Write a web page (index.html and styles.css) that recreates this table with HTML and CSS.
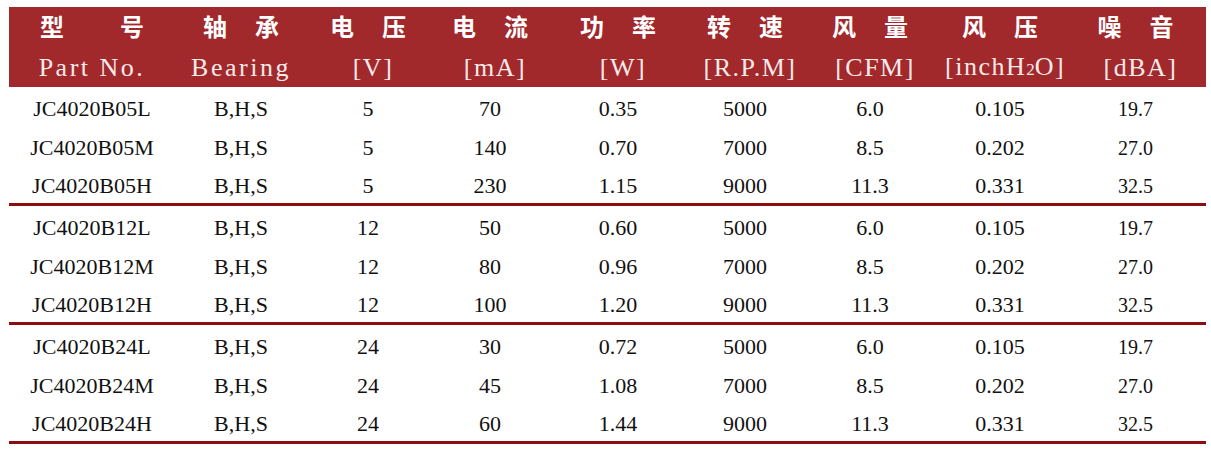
FILE: index.html
```html
<!DOCTYPE html>
<html lang="zh">
<head>
<meta charset="utf-8">
<title>JC4020 Fan Specifications</title>
<link rel="stylesheet" href="styles.css">
</head>
<body>
<table class="spec">
  <colgroup>
    <col class="c1"><col class="c2"><col class="c3"><col class="c4"><col class="c5"><col class="c6"><col class="c7"><col class="c8"><col class="c9">
  </colgroup>
  <thead>
    <tr class="cn-row">
      <th><span class="cn wide"><span>型</span><span>号</span></span></th>
      <th><span class="cn"><span>轴</span><span>承</span></span></th>
      <th><span class="cn"><span>电</span><span>压</span></span></th>
      <th><span class="cn"><span>电</span><span>流</span></span></th>
      <th><span class="cn"><span>功</span><span>率</span></span></th>
      <th><span class="cn"><span>转</span><span>速</span></span></th>
      <th><span class="cn"><span>风</span><span>量</span></span></th>
      <th><span class="cn"><span>风</span><span>压</span></span></th>
      <th><span class="cn"><span>噪</span><span>音</span></span></th>
    </tr>
    <tr class="en-row">
      <th class="first">Part No.</th>
      <th class="first">Bearing</th>
      <th>[V]</th>
      <th>[mA]</th>
      <th>[W]</th>
      <th>[R.P.M]</th>
      <th>[CFM]</th>
      <th>[inchH<span class="sub">2</span>O]</th>
      <th>[dBA]</th>
    </tr>
  </thead>
  <tbody>
    <tr class="r39"><td>JC4020B05L</td><td>B,H,S</td><td>5</td><td>70</td><td>0.35</td><td>5000</td><td>6.0</td><td>0.105</td><td class="sm">19.7</td></tr>
    <tr class="r38"><td>JC4020B05M</td><td>B,H,S</td><td>5</td><td>140</td><td>0.70</td><td>7000</td><td>8.5</td><td>0.202</td><td class="sm">27.0</td></tr>
    <tr class="rend"><td>JC4020B05H</td><td>B,H,S</td><td>5</td><td>230</td><td>1.15</td><td>9000</td><td>11.3</td><td>0.331</td><td class="sm">32.5</td></tr>
  </tbody>
  <tbody>
    <tr class="r39"><td>JC4020B12L</td><td>B,H,S</td><td>12</td><td>50</td><td>0.60</td><td>5000</td><td>6.0</td><td>0.105</td><td class="sm">19.7</td></tr>
    <tr class="r38"><td>JC4020B12M</td><td>B,H,S</td><td>12</td><td>80</td><td>0.96</td><td>7000</td><td>8.5</td><td>0.202</td><td class="sm">27.0</td></tr>
    <tr class="rend"><td>JC4020B12H</td><td>B,H,S</td><td>12</td><td>100</td><td>1.20</td><td>9000</td><td>11.3</td><td>0.331</td><td class="sm">32.5</td></tr>
  </tbody>
  <tbody>
    <tr class="r39"><td>JC4020B24L</td><td>B,H,S</td><td>24</td><td>30</td><td>0.72</td><td>5000</td><td>6.0</td><td>0.105</td><td class="sm">19.7</td></tr>
    <tr class="r38"><td>JC4020B24M</td><td>B,H,S</td><td>24</td><td>45</td><td>1.08</td><td>7000</td><td>8.5</td><td>0.202</td><td class="sm">27.0</td></tr>
    <tr class="rend"><td>JC4020B24H</td><td>B,H,S</td><td>24</td><td>60</td><td>1.44</td><td>9000</td><td>11.3</td><td>0.331</td><td class="sm">32.5</td></tr>
  </tbody>
</table>
</body>
</html>
```
FILE: styles.css
```css
html, body {
  margin: 0;
  padding: 0;
  background: #ffffff;
}

body {
  padding: 7px 0 0 9px;
  font-family: "Liberation Serif", "Times New Roman", serif;
}

.spec {
  border-collapse: separate;
  border-spacing: 0;
  table-layout: fixed;
  width: 1197px;
}

.c1 { width: 166px; }
.c2 { width: 132px; }
.c3 { width: 122px; }
.c4 { width: 122px; }
.c5 { width: 134px; }
.c6 { width: 120px; }
.c7 { width: 130px; }
.c8 { width: 130px; }
.c9 { width: 141px; }

th {
  padding: 0;
  box-sizing: border-box;
  text-align: center;
  font-weight: normal;
  background: #a1282b;
}

.cn-row,
.en-row {
  height: 40px;
}

.cn-row th {
  height: 40px;
  vertical-align: middle;
}

.cn {
  display: inline-flex;
  gap: 28px;
  font-family: "Noto Sans CJK SC", sans-serif;
  font-weight: 700;
  font-size: 24px;
  line-height: 24px;
  color: #ffffff;
}

.cn.wide {
  gap: 56px;
}

.en-row th {
  height: 40px;
  vertical-align: middle;
  padding: 2px 0 0 10px;
  font-family: "Liberation Serif", "Times New Roman", serif;
  font-size: 26px;
  line-height: 30px;
  letter-spacing: 1.5px;
  color: #fbeaea;
}

.en-row th.first {
  padding-left: 0;
  letter-spacing: 2.5px;
}

.sub {
  font-size: 17px;
  letter-spacing: 0;
}

td {
  padding: 5px 0 0 0;
  box-sizing: border-box;
  text-align: center;
  vertical-align: middle;
  font-size: 22px;
  line-height: 26px;
  color: #111111;
}

.r39 { height: 39px; }
.r38 { height: 38px; }
.rend { height: 42px; }

.r39 td { height: 39px; }
.r38 td { height: 38px; }
.rend td {
  height: 42px;
  border-bottom: 3px solid #8e0b0f;
}

td.sm {
  font-size: 20px;
}
```
